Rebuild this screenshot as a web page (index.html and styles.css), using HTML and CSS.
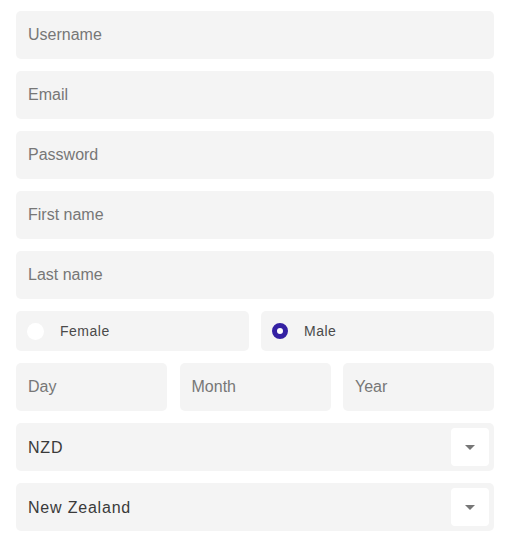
FILE: index.html
```html
<!DOCTYPE html>
<html>
<head>
<meta charset="utf-8">
<link rel="stylesheet" href="styles.css">
</head>
<body>
<form class="form">
  <div class="field"><span class="placeholder">Username</span></div>
  <div class="field"><span class="placeholder">Email</span></div>
  <div class="field"><span class="placeholder">Password</span></div>
  <div class="field"><span class="placeholder">First name</span></div>
  <div class="field"><span class="placeholder">Last name</span></div>
  <div class="row two">
    <div class="radio-box"><span class="radio"></span><span class="radio-label">Female</span></div>
    <div class="radio-box"><span class="radio checked"></span><span class="radio-label">Male</span></div>
  </div>
  <div class="row three">
    <div class="field"><span class="placeholder">Day</span></div>
    <div class="field"><span class="placeholder">Month</span></div>
    <div class="field"><span class="placeholder">Year</span></div>
  </div>
  <div class="field select"><span class="value">NZD</span><span class="caret-btn"><span class="caret"></span></span></div>
  <div class="field select"><span class="value">New Zealand</span><span class="caret-btn"><span class="caret"></span></span></div>
</form>
</body>
</html>
```
FILE: styles.css
```css
html, body {
  margin: 0;
  padding: 0;
  background: #ffffff;
}
body {
  padding: 11px 19px 0 16px;
  font-family: "Liberation Sans", Arial, sans-serif;
}
.form {
  display: flex;
  flex-direction: column;
  gap: 12px;
  width: 478px;
}
.field {
  height: 48px;
  box-sizing: border-box;
  background: #f4f4f4;
  border-radius: 5px;
  display: flex;
  align-items: center;
  padding: 0 12px;
}
.placeholder {
  font-size: 16px;
  color: #777777;
}
.row {
  display: grid;
  gap: 12px;
}
.row.two {
  grid-template-columns: 1fr 1fr;
}
.row.three {
  grid-template-columns: 151px 151px 151px;
  justify-content: space-between;
}
.radio-box {
  height: 40px;
  background: #f4f4f4;
  border-radius: 5px;
  display: flex;
  align-items: center;
  padding-left: 11px;
}
.radio {
  width: 17px;
  height: 17px;
  border-radius: 50%;
  background: #ffffff;
  box-sizing: border-box;
  flex: none;
}
.radio.checked {
  border: 5px solid #3421a3;
  width: 16px;
  height: 16px;
}
.radio-label {
  margin-left: 16px;
  font-size: 14px;
  letter-spacing: 0.5px;
  color: #4a4a4a;
}
.select {
  justify-content: space-between;
  padding-right: 5px;
}
.value {
  font-size: 16px;
  letter-spacing: 0.8px;
  color: #3a3a3a;
  padding-top: 2px;
}
.caret-btn {
  width: 38px;
  height: 38px;
  background: #ffffff;
  border-radius: 4px;
  display: flex;
  align-items: center;
  justify-content: center;
}
.caret {
  width: 0;
  height: 0;
  border-left: 5px solid transparent;
  border-right: 5px solid transparent;
  border-top: 5px solid #777777;
}
```
